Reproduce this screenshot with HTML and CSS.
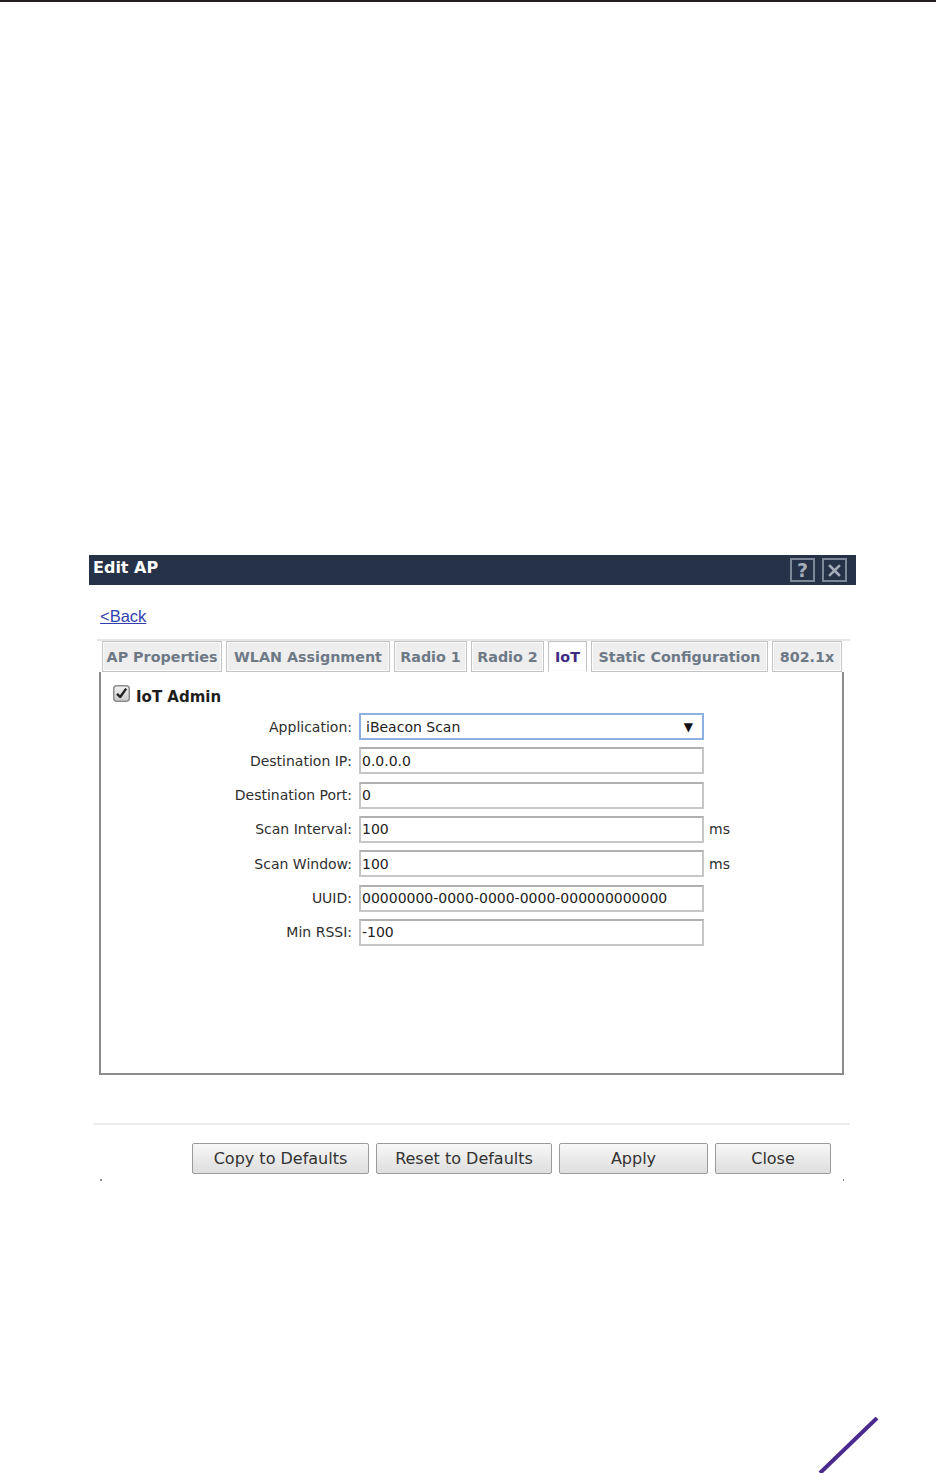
FILE: index.html
```html
<!DOCTYPE html>
<html>
<head>
<meta charset="utf-8">
<title>Edit AP</title>
<link rel="stylesheet" href="styles.css">
</head>
<body>
<div class="topline"></div>
<div class="dialog">
  <div class="titlebar">
    <span class="title">Edit AP</span>
    <div class="tools">
      <span class="tool tool-help">?</span>
      <span class="tool tool-close"><svg width="13" height="13" viewBox="0 0 13 13"><path d="M2 2 L11 11 M11 2 L2 11" stroke="#a3abb7" stroke-width="2.6" stroke-linecap="square"/></svg></span>
    </div>
  </div>
  <div class="backrow"><a class="back" href="#">&lt;Back</a></div>
  <div class="tabstrip">
    <div class="tabs">
      <span class="tab tab-ap">AP Properties</span>
      <span class="tab tab-wlan">WLAN Assignment</span>
      <span class="tab tab-r1">Radio 1</span>
      <span class="tab tab-r2">Radio 2</span>
      <span class="tab tab-iot tab-active">IoT</span>
      <span class="tab tab-static">Static Configuration</span>
      <span class="tab tab-dot1x">802.1x</span>
    </div>
    <div class="panel">
      <div class="admin">
        <svg class="check" width="17" height="17" viewBox="0 0 17 17">
          <defs>
            <linearGradient id="cb" x1="0" y1="0" x2="0" y2="1">
              <stop offset="0" stop-color="#f2f2f2"/>
              <stop offset="1" stop-color="#c9c9c9"/>
            </linearGradient>
          </defs>
          <rect x="0.75" y="0.75" width="15.5" height="15.5" rx="3" fill="url(#cb)" stroke="#8d8d8d" stroke-width="1.5"/>
          <path d="M4 8.8 L7.2 12 L13.2 3.6" fill="none" stroke="#222" stroke-width="2.4" stroke-linejoin="round"/>
        </svg>
        <span class="admin-label">IoT Admin</span>
      </div>
      <div class="form">
        <span class="lbl">Application:</span>
        <div class="field select"><span>iBeacon Scan</span><span class="arrow">&#9660;</span></div>
        <span></span>

        <span class="lbl">Destination IP:</span>
        <div class="field">0.0.0.0</div>
        <span></span>

        <span class="lbl">Destination Port:</span>
        <div class="field">0</div>
        <span></span>

        <span class="lbl">Scan Interval:</span>
        <div class="field">100</div>
        <span class="unit">ms</span>

        <span class="lbl">Scan Window:</span>
        <div class="field">100</div>
        <span class="unit">ms</span>

        <span class="lbl">UUID:</span>
        <div class="field">00000000-0000-0000-0000-000000000000</div>
        <span></span>

        <span class="lbl">Min RSSI:</span>
        <div class="field">-100</div>
        <span></span>
      </div>
    </div>
  </div>
  <div class="sep"></div>
  <div class="actions">
    <span class="btn btn-copy">Copy to Defaults</span>
    <span class="btn btn-reset">Reset to Defaults</span>
    <span class="btn btn-apply">Apply</span>
    <span class="btn btn-close">Close</span>
  </div>
  <div class="dots"><span class="dot"></span><span class="dot"></span></div>
</div>
<div class="brand">
  <svg width="62" height="56" viewBox="0 0 62 56"><path d="M2 56 L59 1" stroke="#4a2a8e" stroke-width="4"/></svg>
</div>
</body>
</html>
```
FILE: styles.css
```css
html, body {
  margin: 0;
  padding: 0;
  background: #ffffff;
  overflow: hidden;
}
body {
  width: 936px;
  height: 1473px;
  font-family: "DejaVu Sans", Verdana, sans-serif;
  color: #333;
}
.topline {
  height: 2px;
  background: #231f20;
}
.dialog {
  margin-top: 553px;
  margin-left: 89px;
  width: 767px;
}
.titlebar {
  height: 30px;
  background: #253248;
  display: flex;
  align-items: center;
  justify-content: space-between;
  padding-left: 4px;
  box-sizing: border-box;
}
.title {
  color: #ffffff;
  font-weight: bold;
  font-size: 16px;
  position: relative;
  top: -3px;
}
.tools {
  display: flex;
  gap: 7px;
  margin-right: 9px;
}
.tool {
  width: 25px;
  height: 24px;
  box-sizing: border-box;
  border: 2px solid #7c8797;
  display: flex;
  align-items: center;
  justify-content: center;
  color: #a3abb7;
  font-weight: bold;
  font-size: 19px;
  line-height: 1;
}
.backrow {
  height: 54px;
  box-sizing: border-box;
  padding: 21px 0 0 11px;
  font-family: "Liberation Sans", Arial, sans-serif;
  font-size: 16.5px;
  line-height: 20px;
}
.back {
  color: #2f3fae;
  text-decoration: underline;
}
.tabstrip {
  margin-left: 8px;
  width: 753px;
  border-top: 2px solid #e6e6e6;
}
.tabs {
  display: flex;
  gap: 4px;
  padding-left: 5px;
  height: 31px;
}
.tab {
  display: flex;
  align-items: center;
  justify-content: center;
  height: 31px;
  box-sizing: border-box;
  padding: 0 2px;
  border: 1px solid #c4c4c4;
  box-shadow: inset 0 0 0 1px #fbfbfb;
  background: #eeeeee;
  font-weight: bold;
  font-size: 14.3px;
  color: #6e7986;
  white-space: nowrap;
}
.tab-ap { width: 120px; }
.tab-wlan { width: 164px; }
.tab-r1 { width: 73px; }
.tab-r2 { width: 73px; }
.tab-iot { width: 39px; }
.tab-static { width: 177px; }
.tab-dot1x { width: 70px; }
.tab-active {
  background: #ffffff;
  color: #3d2b82;
  border-bottom-color: #ffffff;
}
.panel {
  margin-left: 2px;
  width: 745px;
  height: 403px;
  box-sizing: border-box;
  border: 2px solid #8c8c8c;
  border-top: none;
  padding-top: 13px;
}
.admin {
  display: flex;
  align-items: center;
  height: 17px;
  padding-left: 12px;
}
.check {
  display: block;
}
.admin-label {
  margin-left: 6px;
  font-weight: bold;
  font-size: 15px;
  color: #1e1e1e;
  position: relative;
  top: 3px;
}
.form {
  margin-top: 11px;
  display: grid;
  grid-template-columns: 251px 345px auto;
  grid-auto-rows: 27px;
  column-gap: 7px;
  row-gap: 7.33px;
  font-size: 14px;
}
.lbl {
  text-align: right;
  align-self: center;
  color: #2f2f2f;
}
.field {
  box-sizing: border-box;
  height: 27px;
  border: 2px solid #c6c6c6;
  border-top-color: #b0b0b0;
  padding-left: 1px;
  display: flex;
  align-items: center;
  color: #222;
  white-space: nowrap;
}
.select {
  border-color: #8fb0e2;
  padding-left: 5px;
  padding-right: 9px;
  justify-content: space-between;
}
.arrow {
  font-size: 12px;
  color: #111;
}
.unit {
  align-self: center;
  margin-left: -2px;
  color: #2f2f2f;
}
.sep {
  margin-top: 48px;
  margin-left: 4px;
  width: 757px;
  height: 2px;
  background: #ececec;
}
.actions {
  margin-top: 18px;
  padding-left: 103px;
  display: flex;
  gap: 7px;
}
.btn {
  height: 31px;
  box-sizing: border-box;
  display: flex;
  align-items: center;
  justify-content: center;
  border: 1px solid #9b9b9b;
  border-radius: 2px;
  background: linear-gradient(#f7f7f7, #dedede);
  font-size: 16px;
  color: #333;
}
.btn-copy { width: 177px; }
.btn-reset { width: 176px; }
.btn-apply { width: 149px; }
.btn-close { width: 116px; }
.dots {
  margin-top: 5px;
  height: 2px;
  display: flex;
  justify-content: space-between;
  padding: 0 12px 0 11px;
}
.dot {
  width: 1.5px;
  height: 1.5px;
  background: #888;
}
.brand {
  margin-top: 236px;
  margin-left: 818px;
  height: 56px;
}
.brand svg {
  display: block;
}
```
